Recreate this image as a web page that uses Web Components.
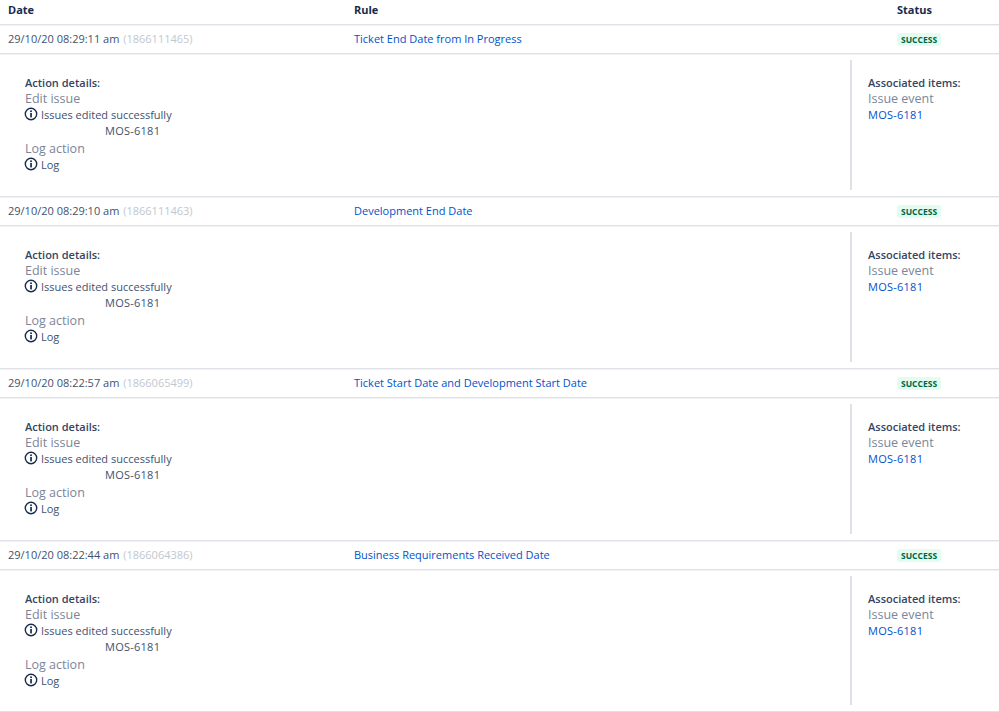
<!DOCTYPE html>
<html>
<head>
<meta charset="utf-8">
<title>Audit log</title>
<style>
  html, body { margin: 0; padding: 0; background: #fff; }
  body { font-family: "Open Sans", "Noto Sans", sans-serif; font-size: 11px; color: #42526e; overflow: hidden; }
</style>
</head>
<body>
<audit-log></audit-log>

<script>
class InfoIcon extends HTMLElement {
  constructor() {
    super();
    this.attachShadow({ mode: 'open' });
    this.shadowRoot.innerHTML = `
      <style>
        :host { display: block; flex: none; width: 14px; height: 14px; }
        svg { display: block; }
      </style>
      <svg width="14" height="14" viewBox="0 0 14 14" fill="none">
        <circle cx="7" cy="7" r="5.7" stroke="#172b4d" stroke-width="1.4"/>
        <rect x="6.2" y="3.4" width="1.7" height="1.7" fill="#172b4d"/>
        <rect x="6.2" y="6" width="1.7" height="4.4" fill="#172b4d"/>
      </svg>`;
  }
}
customElements.define('info-icon', InfoIcon);

class StatusLozenge extends HTMLElement {
  constructor() {
    super();
    this.attachShadow({ mode: 'open' });
    this.shadowRoot.innerHTML = `
      <style>
        :host {
          display: inline-block;
          background: #e3fcef;
          color: #006644;
          font-size: 8.5px;
          font-weight: 700;
          line-height: 13px;
          padding: 0 4px;
          border-radius: 3px;
        }
      </style>
      <slot></slot>`;
  }
}
customElements.define('status-lozenge', StatusLozenge);

class ActionDetails extends HTMLElement {
  constructor() {
    super();
    this.attachShadow({ mode: 'open' });
    this.shadowRoot.innerHTML = `
      <style>
        :host { display: flex; height: 130px; padding: 6px 0; }
        .main { flex: 1; padding: 15px 0 0 25px; }
        .side { width: 131px; border-left: 2px solid #dfe1e6; padding: 15px 0 0 16px; }
        h4 { margin: 0; font-size: 11px; line-height: 16px; font-weight: 600; color: #344563; }
        .type { font-size: 12.5px; line-height: 16px; color: #7a869a; }
        .msg { display: flex; align-items: flex-start; height: 16px; line-height: 16px; margin-left: -1px; gap: 3px; }
        .issue { line-height: 16px; padding-left: 80px; letter-spacing: .25px; }
        .type.second { margin-top: 2px; }
        a { color: #0052cc; text-decoration: none; line-height: 16px; display: block; letter-spacing: .25px; }
      </style>
      <div class="main">
        <h4>Action details:</h4>
        <div class="type">Edit issue</div>
        <div class="msg"><info-icon></info-icon><span>Issues edited successfully</span></div>
        <div class="issue">MOS-6181</div>
        <div class="type second">Log action</div>
        <div class="msg"><info-icon></info-icon><span>Log</span></div>
      </div>
      <div class="side">
        <h4>Associated items:</h4>
        <div class="type">Issue event</div>
        <a href="#">MOS-6181</a>
      </div>`;
  }
}
customElements.define('action-details', ActionDetails);

class LogRow extends HTMLElement {
  constructor() {
    super();
    this.attachShadow({ mode: 'open' });
    this.shadowRoot.innerHTML = `
      <style>
        :host { display: block; }
        .head {
          display: grid;
          grid-template-columns: 346px 1fr 102px;
          align-items: center;
          height: 27px;
          padding: 0 0 1px 8px;
          border-bottom: 1px solid #dfe1e6;
          box-shadow: 0 1px 0 #f1f2f4;
        }
        .id { color: #c1c7d0; margin-left: 1px; }
        a { color: #0052cc; text-decoration: none; }
        action-details { border-bottom: 1px solid #dfe1e6; box-shadow: 0 1px 0 #f1f2f4; }
        /* the last row is a pixel shorter in the reference */
        :host(:last-child) action-details { height: 129px; }
      </style>
      <div class="head">
        <div><span class="date"></span> <span class="id"></span></div>
        <div><a href="#" class="rule"></a></div>
        <div><status-lozenge>SUCCESS</status-lozenge></div>
      </div>
      <action-details></action-details>`;
  }

  connectedCallback() {
    this.shadowRoot.querySelector('.date').textContent = this.getAttribute('date');
    this.shadowRoot.querySelector('.id').textContent = '(' + this.getAttribute('log-id') + ')';
    this.shadowRoot.querySelector('.rule').textContent = this.getAttribute('rule');
  }
}
customElements.define('log-row', LogRow);

class AuditLog extends HTMLElement {
  constructor() {
    super();
    this.attachShadow({ mode: 'open' });
  }

  connectedCallback() {
    const rows = [
      ['29/10/20 08:29:11 am', '1866111465', 'Ticket End Date from In Progress'],
      ['29/10/20 08:29:10 am', '1866111463', 'Development End Date'],
      ['29/10/20 08:22:57 am', '1866065499', 'Ticket Start Date and Development Start Date'],
      ['29/10/20 08:22:44 am', '1866064386', 'Business Requirements Received Date']
    ];
    this.shadowRoot.innerHTML = `
      <style>
        :host { display: block; }
        .cols {
          display: grid;
          grid-template-columns: 346px 1fr 102px;
          height: 24px;
          line-height: 20px;
          padding-left: 8px;
          border-bottom: 1px solid #dfe1e6;
          box-shadow: 0 1px 0 #f1f2f4;
          font-weight: 700;
          font-size: 11px;
          color: #172b4d;
        }
      </style>
      <div class="cols"><div>Date</div><div>Rule</div><div>Status</div></div>
      <div class="rows"></div>`;
    const wrap = this.shadowRoot.querySelector('.rows');
    rows.forEach(r => {
      const row = document.createElement('log-row');
      row.setAttribute('date', r[0]);
      row.setAttribute('log-id', r[1]);
      row.setAttribute('rule', r[2]);
      wrap.appendChild(row);
    });
  }
}
customElements.define('audit-log', AuditLog);
</script>
</body>
</html>
